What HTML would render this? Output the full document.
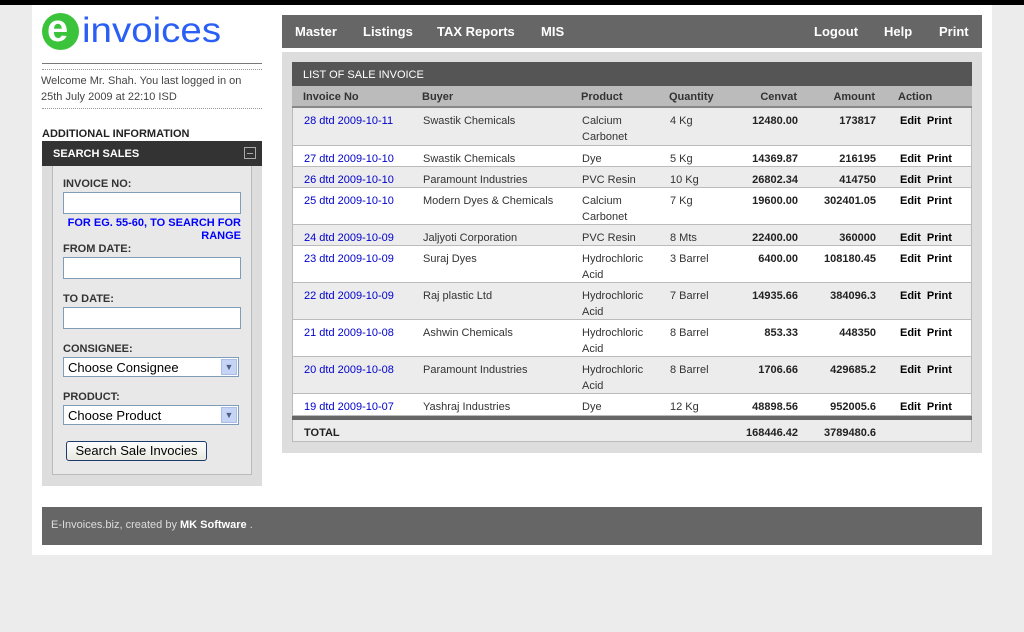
<!DOCTYPE html>
<html><head><meta charset="utf-8"><style>
*{margin:0;padding:0;box-sizing:border-box}
body{width:1024px;height:632px;background:#ececec;font-family:"Liberation Sans",Arial,sans-serif;position:relative;overflow:hidden;font-size:11px;color:#333}
.a{position:absolute}
.top{left:0;top:0;width:1024px;height:5px;background:#000}
.wrap{left:32px;top:5px;width:960px;height:550px;background:#fff}
.nav{left:282px;top:15px;width:700px;height:33px;background:#666;color:#fff;font-weight:bold;font-size:13px}
.nav span{position:absolute;top:9px}
.panel{left:282px;top:52px;width:700px;height:401px;background:#ddd}
.th{left:292px;top:62px;width:680px;height:24px;background:#555;color:#fff;font-size:11px;padding:7px 0 0 11px}
.ch{left:292px;top:86px;width:680px;height:22px;background:#bbb;border-bottom:2px solid #888;font-weight:bold;color:#333}
.row{left:292px;width:680px;border-bottom:1px solid #bbb;border-left:1px solid #bbb;border-right:1px solid #bbb;line-height:16px}
.c{position:absolute;top:5px}
.r{text-align:right}
.b{font-weight:bold;color:#222}
.lnk{color:#00c}
.lbl{position:absolute;left:63px;font-weight:bold;font-size:11px;color:#333}
.inp{position:absolute;left:63px;width:178px;height:22px;background:#fff;border:1px solid #7f9db9}
.sel{position:absolute;left:63px;width:176px;height:20px;background:#fff;border:1px solid #7f9db9;font-size:13px;color:#000;padding:2px 4px;line-height:15px}
.sel i{position:absolute;right:1px;top:1px;width:16px;height:16px;background:#c6d5f5;border:1px solid #a9bde6;font-style:normal;color:#4d6185;font-size:9px;text-align:center;line-height:15px}
</style></head><body>
<div class="a top"></div>
<div class="a wrap"></div>
<!-- logo -->
<div class="a" style="left:42px;top:13px;width:37px;height:37px;border-radius:50%;background:#3bc43b"></div>
<div class="a" style="left:47px;top:9px;font-size:38px;line-height:40px;color:#fff;font-family:'Liberation Sans',sans-serif;font-weight:bold">e</div>
<div class="a" style="left:82px;top:11px;font-size:35px;line-height:40px;color:#2b5ef5;font-family:'Liberation Sans',sans-serif;letter-spacing:0px;transform:scaleX(1.1);transform-origin:left">invoices</div>
<div class="a" style="left:42px;top:63px;width:220px;border-top:1px solid #777"></div>
<div class="a" style="left:42px;top:69px;width:220px;border-top:1px dotted #999"></div>
<div class="a" style="left:41px;top:73px;width:230px;line-height:16px;font-size:11px;color:#444">Welcome Mr. Shah. You last logged in on<br>25th July 2009 at 22:10 ISD</div>
<div class="a" style="left:42px;top:108px;width:220px;border-top:1px dotted #999"></div>
<div class="a" style="left:42px;top:128px;font-weight:bold;font-size:11px;color:#222">ADDITIONAL INFORMATION</div>
<div class="a" style="left:42px;top:141px;width:220px;height:25px;background:#333;color:#fff;font-weight:bold;padding:7px 0 0 11px">SEARCH SALES</div>
<div class="a" style="left:244px;top:147px;width:12px;height:12px;border:1px solid #aaa"><div style="margin:5px 2px 0;border-top:1px solid #aaa"></div></div>
<div class="a" style="left:42px;top:166px;width:220px;height:320px;background:#ddd"></div>
<div class="a" style="left:52px;top:166px;width:200px;height:309px;background:#e8e8e8;border:1px solid #bbb;border-top:none"></div>
<div class="lbl" style="top:178px">INVOICE NO:</div>
<div class="inp" style="top:192px"></div>
<div class="a" style="left:63px;top:217px;width:178px;text-align:right;color:#00f;font-weight:bold;line-height:13px">FOR EG. 55-60, TO SEARCH FOR RANGE</div>
<div class="lbl" style="top:243px">FROM DATE:</div>
<div class="inp" style="top:257px"></div>
<div class="lbl" style="top:293px">TO DATE:</div>
<div class="inp" style="top:307px"></div>
<div class="lbl" style="top:343px">CONSIGNEE:</div>
<div class="sel" style="top:357px">Choose Consignee<i>&#9660;</i></div>
<div class="lbl" style="top:391px">PRODUCT:</div>
<div class="sel" style="top:405px">Choose Product<i>&#9660;</i></div>
<div class="a" style="left:66px;top:441px;width:141px;height:20px;border:1px solid #1c3a6b;border-radius:3px;background:linear-gradient(#fff,#e8e8e0);font-size:13px;color:#000;text-align:center;line-height:18px">Search Sale Invocies</div>
<!-- nav -->
<div class="a nav"><span style="left:13px">Master</span><span style="left:81px">Listings</span><span style="left:155px">TAX Reports</span><span style="left:259px">MIS</span><span style="left:532px">Logout</span><span style="left:602px">Help</span><span style="left:657px">Print</span></div>
<div class="a panel"></div>
<div class="a th">LIST OF SALE INVOICE</div>
<div class="a ch"><span class="c" style="left:11px">Invoice No</span><span class="c" style="left:130px">Buyer</span><span class="c" style="left:289px">Product</span><span class="c" style="left:377px">Quantity</span><span class="c r" style="left:405px;width:100px">Cenvat</span><span class="c r" style="left:483px;width:100px">Amount</span><span class="c" style="left:606px">Action</span></div>
<div id="rows"></div>
<script>
var d=[["28 dtd 2009-10-11","Swastik Chemicals","Calcium<br>Carbonet","4 Kg","12480.00","173817",38],
["27 dtd 2009-10-10","Swastik Chemicals","Dye","5 Kg","14369.87","216195",21],
["26 dtd 2009-10-10","Paramount Industries","PVC Resin","10 Kg","26802.34","414750",21],
["25 dtd 2009-10-10","Modern Dyes &amp; Chemicals","Calcium<br>Carbonet","7 Kg","19600.00","302401.05",37],
["24 dtd 2009-10-09","Jaljyoti Corporation","PVC Resin","8 Mts","22400.00","360000",21],
["23 dtd 2009-10-09","Suraj Dyes","Hydrochloric<br>Acid","3 Barrel","6400.00","108180.45",37],
["22 dtd 2009-10-09","Raj plastic Ltd","Hydrochloric<br>Acid","7 Barrel","14935.66","384096.3",37],
["21 dtd 2009-10-08","Ashwin Chemicals","Hydrochloric<br>Acid","8 Barrel","853.33","448350",37],
["20 dtd 2009-10-08","Paramount Industries","Hydrochloric<br>Acid","8 Barrel","1706.66","429685.2",37],
["19 dtd 2009-10-07","Yashraj Industries","Dye","12 Kg","48898.56","952005.6",22]];
var y=108,h="";
d.forEach(function(r,i){
h+='<div class="a row" style="top:'+y+'px;height:'+r[6]+'px;background:'+(i%2?'#fff':'#ececec')+'">'+
'<span class="c lnk" style="left:11px">'+r[0]+'</span><span class="c" style="left:130px">'+r[1]+'</span><span class="c" style="left:289px">'+r[2]+'</span><span class="c" style="left:377px">'+r[3]+'</span><span class="c r b" style="left:405px;width:100px">'+r[4]+'</span><span class="c r b" style="left:483px;width:100px">'+r[5]+'</span><span class="c b" style="left:607px;color:#000">Edit&nbsp; Print</span></div>';
y+=r[6];});
document.getElementById('rows').innerHTML=h;
</script>
<div class="a" style="left:292px;top:416px;width:680px;height:4px;border-top:2px solid #666;border-bottom:2px solid #666;background:#fff"></div>
<div class="a row" style="top:420px;height:22px;background:#ececec"><span class="c b" style="left:11px">TOTAL</span><span class="c r b" style="left:405px;width:100px">168446.42</span><span class="c r b" style="left:483px;width:100px">3789480.6</span></div>
<div class="a" style="left:42px;top:507px;width:940px;height:38px;background:#666;color:#ddd;font-size:11px;padding:12px 0 0 9px">E-Invoices.biz, created by <b style="color:#fff">MK Software</b> .</div>
</body></html>
